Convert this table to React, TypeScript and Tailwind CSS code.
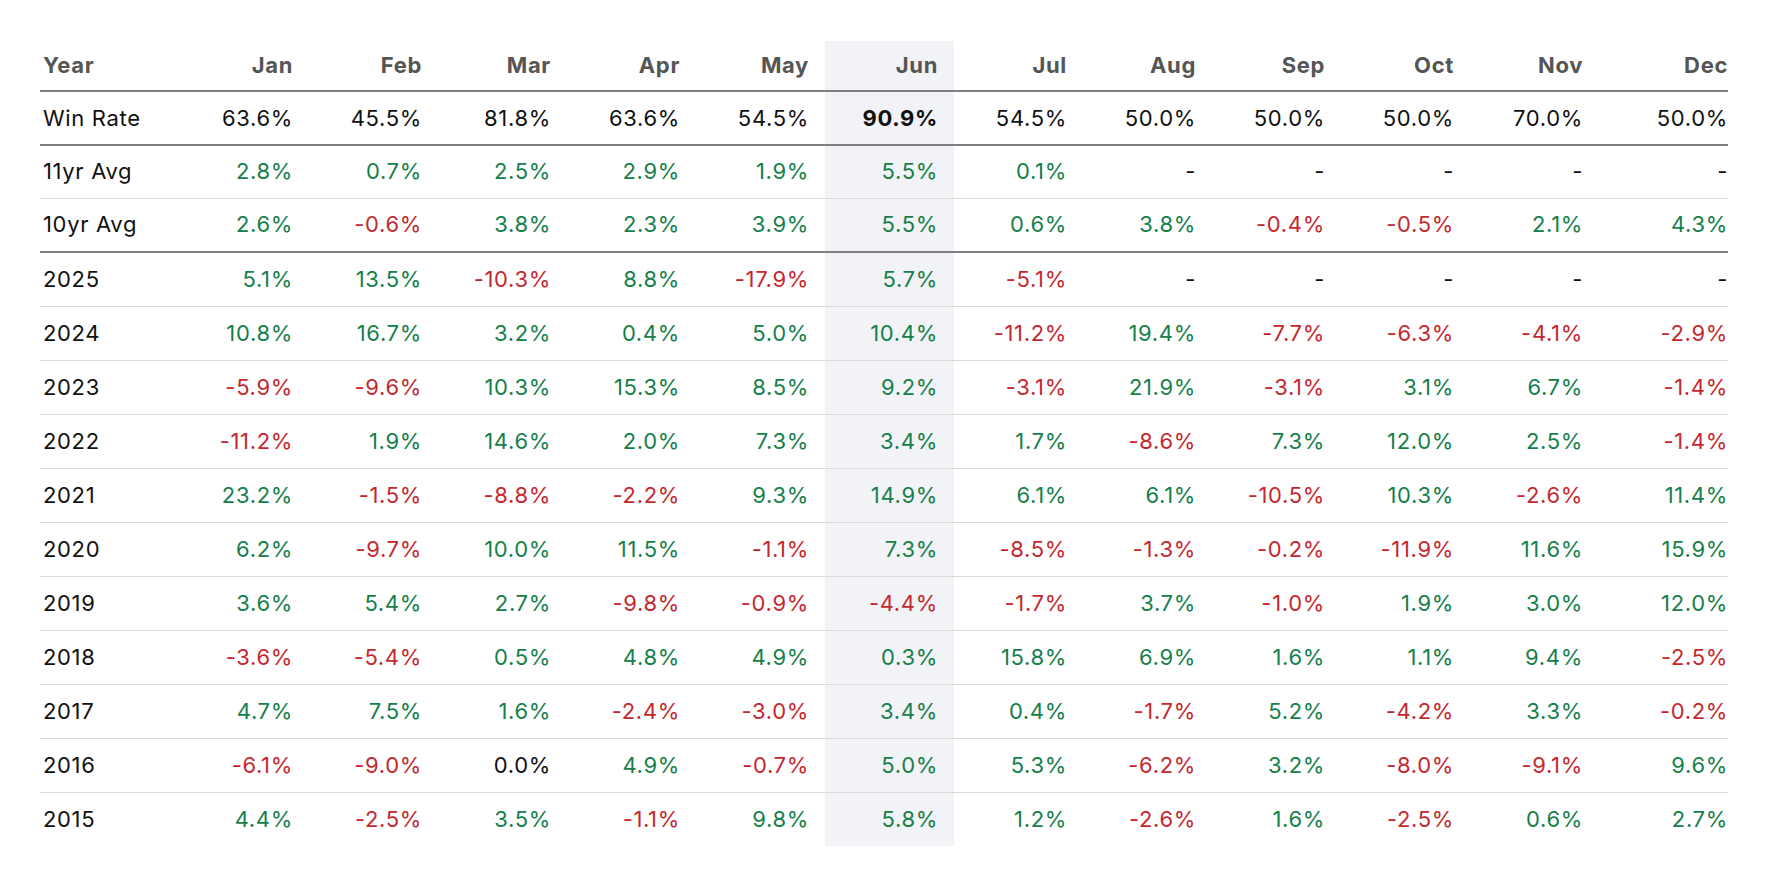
import React from "react";

const months = ["Jan","Feb","Mar","Apr","May","Jun","Jul","Aug","Sep","Oct","Nov","Dec"];

type Row = { label: string; vals: string[]; border: "dark" | "light" | "none"; plain?: boolean };

const rows: Row[] = [
  { label: "Win Rate", vals: ["63.6","45.5","81.8","63.6","54.5","90.9","54.5","50.0","50.0","50.0","70.0","50.0"], border: "dark", plain: true },
  { label: "11yr Avg", vals: ["2.8","0.7","2.5","2.9","1.9","5.5","0.1","-","-","-","-","-"], border: "light" },
  { label: "10yr Avg", vals: ["2.6","-0.6","3.8","2.3","3.9","5.5","0.6","3.8","-0.4","-0.5","2.1","4.3"], border: "dark" },
  { label: "2025", vals: ["5.1","13.5","-10.3","8.8","-17.9","5.7","-5.1","-","-","-","-","-"], border: "light" },
  { label: "2024", vals: ["10.8","16.7","3.2","0.4","5.0","10.4","-11.2","19.4","-7.7","-6.3","-4.1","-2.9"], border: "light" },
  { label: "2023", vals: ["-5.9","-9.6","10.3","15.3","8.5","9.2","-3.1","21.9","-3.1","3.1","6.7","-1.4"], border: "light" },
  { label: "2022", vals: ["-11.2","1.9","14.6","2.0","7.3","3.4","1.7","-8.6","7.3","12.0","2.5","-1.4"], border: "light" },
  { label: "2021", vals: ["23.2","-1.5","-8.8","-2.2","9.3","14.9","6.1","6.1","-10.5","10.3","-2.6","11.4"], border: "light" },
  { label: "2020", vals: ["6.2","-9.7","10.0","11.5","-1.1","7.3","-8.5","-1.3","-0.2","-11.9","11.6","15.9"], border: "light" },
  { label: "2019", vals: ["3.6","5.4","2.7","-9.8","-0.9","-4.4","-1.7","3.7","-1.0","1.9","3.0","12.0"], border: "light" },
  { label: "2018", vals: ["-3.6","-5.4","0.5","4.8","4.9","0.3","15.8","6.9","1.6","1.1","9.4","-2.5"], border: "light" },
  { label: "2017", vals: ["4.7","7.5","1.6","-2.4","-3.0","3.4","0.4","-1.7","5.2","-4.2","3.3","-0.2"], border: "light" },
  { label: "2016", vals: ["-6.1","-9.0","0.0","4.9","-0.7","5.0","5.3","-6.2","3.2","-8.0","-9.1","9.6"], border: "light" },
  { label: "2015", vals: ["4.4","-2.5","3.5","-1.1","9.8","5.8","1.2","-2.6","1.6","-2.5","0.6","2.7"], border: "none" },
];

function colorFor(v: string, plain?: boolean) {
  if (plain || v === "-" || v === "0.0") return "text-[#111111]";
  if (v.startsWith("-")) return "text-[#c4282e]";
  return "text-[#15804a]";
}

export default function App() {
  return (
    <div className="bg-white min-h-[880px] w-[1776px] pt-[41px] pl-[40px] font-['Inter','Noto_Sans',sans-serif]">
      <table className="table-fixed border-collapse w-[1688px] text-[22px] tracking-[0.03em]">
        <colgroup>
          <col className="w-[140px]" />
          {months.map((m) => (
            <col key={m} className="w-[129px]" />
          ))}
        </colgroup>
        <thead>
          <tr className="border-b-2 border-[#7d7f82]">
            <th className="h-[50px] text-left pl-[3px] font-bold text-[#555555]">Year</th>
            {months.map((m, i) => (
              <th
                key={m}
                className={
                  "h-[50px] text-right font-bold text-[#555555] " +
                  (i === 11 ? "pr-0 " : "pr-4 ") +
                  (i === 5 ? "bg-[#f2f3f7]" : "")
                }
              >
                {m}
              </th>
            ))}
          </tr>
        </thead>
        <tbody>
          {rows.map((r) => {
            const h = r.label === "11yr Avg" ? "h-[53px] " : "h-[54px] ";
            return (
              <tr
                key={r.label}
                className={
                  r.border === "dark"
                    ? "border-b-2 border-[#7d7f82]"
                    : r.border === "light"
                    ? "border-b border-[#d9d9d9]"
                    : ""
                }
              >
                <td className={h + "text-left pl-[3px] text-[#111111]"}>{r.label}</td>
                {r.vals.map((v, i) => (
                  <td
                    key={i}
                    className={
                      h +
                      "text-right " +
                      colorFor(v, r.plain) +
                      " " +
                      (i === 11 ? "pr-0 " : "pr-4 ") +
                      (i === 5 ? "bg-[#f2f3f7] " : "") +
                      (r.plain && i === 5 ? "font-bold" : "")
                    }
                  >
                    {v === "-" ? "-" : v + "%"}
                  </td>
                ))}
              </tr>
            );
          })}
        </tbody>
      </table>
    </div>
  );
}
